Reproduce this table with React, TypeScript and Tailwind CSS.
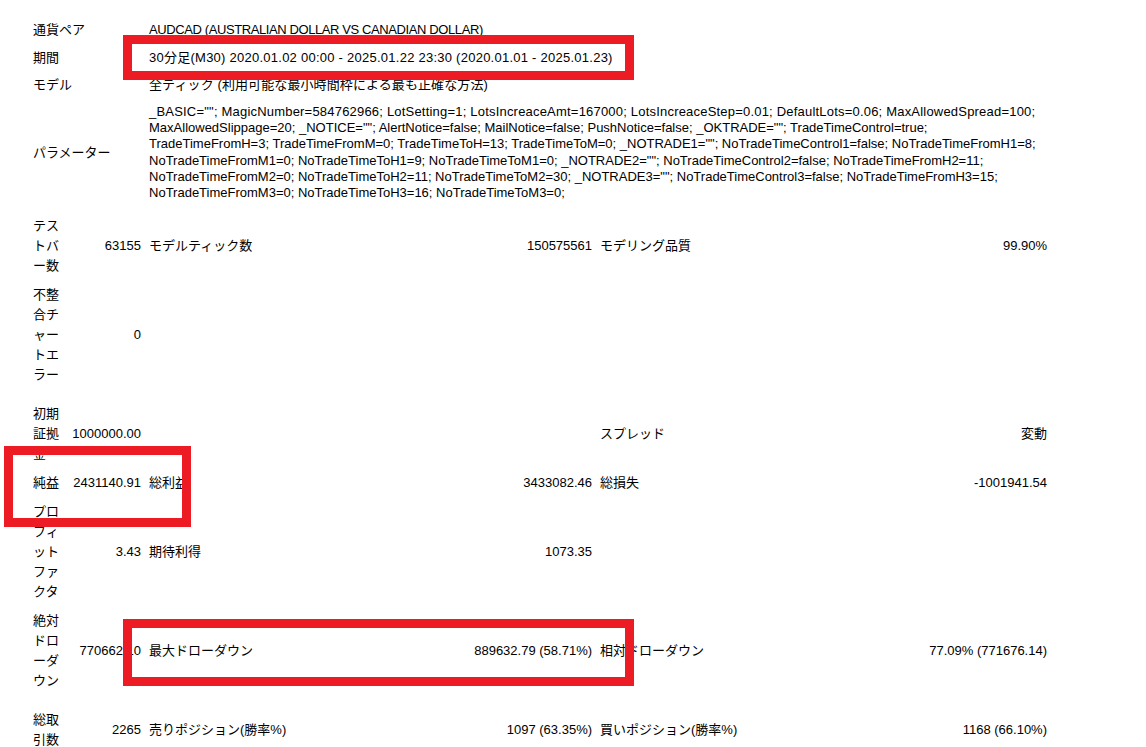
const params = [
  '_BASIC=""; MagicNumber=584762966; LotSetting=1; LotsIncreaceAmt=167000; LotsIncreaceStep=0.01; DefaultLots=0.06; MaxAllowedSpread=100;',
  'MaxAllowedSlippage=20; _NOTICE=""; AlertNotice=false; MailNotice=false; PushNotice=false; _OKTRADE=""; TradeTimeControl=true;',
  'TradeTimeFromH=3; TradeTimeFromM=0; TradeTimeToH=13; TradeTimeToM=0; _NOTRADE1=""; NoTradeTimeControl1=false; NoTradeTimeFromH1=8;',
  'NoTradeTimeFromM1=0; NoTradeTimeToH1=9; NoTradeTimeToM1=0; _NOTRADE2=""; NoTradeTimeControl2=false; NoTradeTimeFromH2=11;',
  'NoTradeTimeFromM2=0; NoTradeTimeToH2=11; NoTradeTimeToM2=30; _NOTRADE3=""; NoTradeTimeControl3=false; NoTradeTimeFromH3=15;',
  "NoTradeTimeFromM3=0; NoTradeTimeToH3=16; NoTradeTimeToM3=0;",
];

type Stat = [string, string, string, string, string, string];

const stats: (Stat | "gap")[] = [
  ["テストバー数", "63155", "モデルティック数", "150575561", "モデリング品質", "99.90%"],
  ["不整合チャートエラー", "0", "", "", "", ""],
  "gap",
  ["初期証拠金", "1000000.00", "", "", "スプレッド", "変動"],
  ["純益", "2431140.91", "総利益", "3433082.46", "総損失", "-1001941.54"],
  ["プロフィットファクタ", "3.43", "期待利得", "1073.35", "", ""],
  ["絶対ドローダウン", "770662.10", "最大ドローダウン", "889632.79 (58.71%)", "相対ドローダウン", "77.09% (771676.14)"],
  "gap",
  ["総取引数", "2265", "売りポジション(勝率%)", "1097 (63.35%)", "買いポジション(勝率%)", "1168 (66.10%)"],
];

const cell = "px-[4px] py-[4.5px] leading-[20px] whitespace-nowrap";
const head = "px-[4px] py-[4px] leading-[20px] whitespace-nowrap";

const RedBox = ({ className }: { className: string }) => (
  <div className={`pointer-events-none absolute border-[9px] border-[#ed1c24] ${className}`} />
);

export default function App() {
  return (
    <div className="relative min-h-screen bg-white pt-[16px] pl-[29px] font-['Liberation_Sans','Noto_Sans_CJK_JP',sans-serif] text-[13px] text-black">
      <table className="w-[1022px] table-fixed border-separate border-spacing-0">
        <colgroup>
          <col className="w-[35px]" />
          <col className="w-[81px]" />
          <col className="w-[225px]" />
          <col className="w-[226px]" />
          <col className="w-[228px]" />
          <col className="w-[227px]" />
        </colgroup>
        <tbody>
          <tr>
            <td colSpan={2} className={head}>通貨ペア</td>
            <td colSpan={4} className={`${head} tracking-[-0.4px]`}>AUDCAD (AUSTRALIAN DOLLAR VS CANADIAN DOLLAR)</td>
          </tr>
          <tr>
            <td colSpan={2} className={`${head} pb-[3px]`}>期間</td>
            <td colSpan={4} className={`${head} pb-[3px] tracking-[0.25px]`}>
              30分足(M30) 2020.01.02 00:00 - 2025.01.22 23:30 (2020.01.01 - 2025.01.23)
            </td>
          </tr>
          <tr>
            <td colSpan={2} className={head}>モデル</td>
            <td colSpan={4} className={`${head} tracking-[0.1px]`}>全ティック (利用可能な最小時間枠による最も正確な方法)</td>
          </tr>
          <tr>
            <td colSpan={2} className="px-[4px] pt-[5px] pb-[4px] leading-[20px]">パラメーター</td>
            <td colSpan={4} className="px-[4px] pt-[5px] pb-[4px] leading-[16.2px]">
              {params.map((line, index) => (
                <div key={line} className={`whitespace-nowrap ${index === 0 ? "tracking-[0.2px]" : ""}`}>
                  {line}
                </div>
              ))}
            </td>
          </tr>
          <tr>
            <td colSpan={6} className="h-[6px] p-0" />
          </tr>
          {stats.map((row, index) =>
            row === "gap" ? (
              <tr key={index}>
                <td colSpan={6} className="h-[10px] p-0" />
              </tr>
            ) : (
              <tr key={index}>
                <td className="break-all px-[4px] py-[4.5px] leading-[20px] [line-break:anywhere]">{row[0]}</td>
                <td className={`${cell} text-right`}>{row[1]}</td>
                <td className={cell}>{row[2]}</td>
                <td className={`${cell} text-right`}>{row[3]}</td>
                <td className={cell}>{row[4]}</td>
                <td className={`${cell} text-right`}>{row[5]}</td>
              </tr>
            )
          )}
        </tbody>
      </table>

      <RedBox className="left-[123px] top-[35px] h-[45px] w-[511px]" />
      <RedBox className="left-[4px] top-[446px] h-[81px] w-[187px]" />
      <RedBox className="left-[123px] top-[619px] h-[67px] w-[511px]" />
    </div>
  );
}
